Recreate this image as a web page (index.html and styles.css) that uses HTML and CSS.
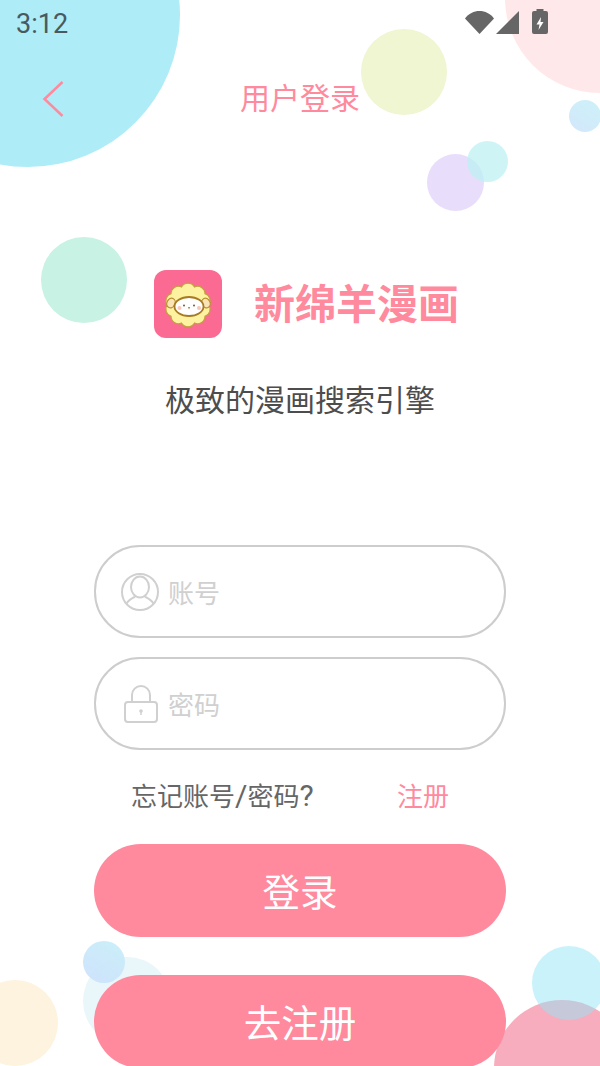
FILE: index.html
```html
<!DOCTYPE html>
<html lang="zh-CN">
<head>
<meta charset="utf-8">
<title>用户登录</title>
<link rel="stylesheet" href="styles.css">
</head>
<body>
<div class="page">
  <div class="bubbles" aria-hidden="true">
    <i class="b b-cyan"></i><i class="b b-rose"></i><i class="b b-lime"></i><i class="b b-sky"></i>
    <i class="b b-purple"></i><i class="b b-teal"></i><i class="b b-mint"></i>
    <i class="b b-cream"></i><i class="b b-pale"></i><i class="b b-blue"></i>
    <i class="b b-pink"></i><i class="b b-aqua"></i>
  </div>
  <div class="status">
    <span class="time">3:12</span>
    <div class="status-icons">
      <svg class="wifi" width="29" height="23" viewBox="0 0 29 23"><path d="M0 7.500C3.500 2.500 9 0 14.500 0S25.500 2.500 29 7.500L14.500 23z" fill="#666"/></svg>
      <svg class="signal" width="23" height="23" viewBox="0 0 23 23"><path d="M0 23 23 0v23z" fill="#666"/></svg>
      <svg class="batt" width="16" height="25" viewBox="0 0 16 25"><path d="M4.500 0h7v2H14a2 2 0 0 1 2 2v19a2 2 0 0 1-2 2H2a2 2 0 0 1-2-2V4a2 2 0 0 1 2-2h2.500z" fill="#666"/><path d="M9 8 4.500 15.500H7.500L6.500 21 11.500 13H8.500z" fill="#fff"/></svg>
    </div>
  </div>
  <header class="nav">
    <svg class="back" width="22" height="36" viewBox="0 0 22 36"><path d="M20.500 1 2.500 18l18 17" fill="none" stroke="#ff8a9e" stroke-width="2.500"/></svg>
    <h1 class="title">用户登录</h1>
  </header>
  <section class="brand">
    <div class="brand-row">
      <svg class="logo" width="68" height="68" viewBox="0 0 68 68">
        <rect width="68" height="68" rx="12" fill="#fb6a92"/>
        <path d="M55 35A7.500 7.500 0 0 1 51 46.200 7.500 7.500 0 0 1 40.500 53.100 7.500 7.500 0 0 1 27.500 53.100 7.500 7.500 0 0 1 17 46.200 7.500 7.500 0 0 1 13 35 7.500 7.500 0 0 1 17 23.800 7.500 7.500 0 0 1 27.500 16.900 7.500 7.500 0 0 1 40.500 16.900 7.500 7.500 0 0 1 51 23.800 7.500 7.500 0 0 1 55 35z" fill="#fdf2a0" stroke="#c4a040" stroke-width="1.200"/>
        <ellipse cx="17" cy="33" rx="4" ry="5" fill="#fbe3b8" stroke="#b8902f" stroke-width="1.200" transform="rotate(25 17 33)"/>
        <ellipse cx="52" cy="33" rx="4" ry="5" fill="#fbe3b8" stroke="#b8902f" stroke-width="1.200" transform="rotate(-25 52 33)"/>
        <ellipse cx="35" cy="36.500" rx="14.500" ry="9.500" fill="#fff" stroke="#a87a22" stroke-width="1.800"/>
        <circle cx="30" cy="35.500" r="1" fill="#7a5a30"/><circle cx="40" cy="35.500" r="1" fill="#7a5a30"/>
        <circle cx="25.500" cy="38" r="2" fill="#fbc5b8"/><circle cx="45" cy="38" r="2" fill="#fbc5b8"/>
        <path d="M34 37h2.200L35 39.500z" fill="#a08050"/>
      </svg>
      <span class="brand-name">新绵羊漫画</span>
    </div>
    <p class="slogan">极致的漫画搜索引擎</p>
  </section>
  <form class="form">
    <label class="field">
      <svg width="38" height="38" viewBox="0 0 38 38" fill="none" stroke="#d0d0d0" stroke-width="2"><circle cx="19" cy="19" r="18"/><ellipse cx="19" cy="14" rx="9" ry="10.500"/><path d="M5.500 31c2-5 7-6 8.500-7.500M32.500 31c-2-5-7-6-8.500-7.500"/></svg>
      <span class="ph">账号</span>
    </label>
    <label class="field">
      <svg class="lock" width="34" height="38" viewBox="0 0 34 38" fill="none" stroke="#d0d0d0" stroke-width="2"><path d="M8 17V10a9 9 0 0 1 18 0v7"/><rect x="1" y="17" width="32" height="20" rx="3"/><circle cx="17" cy="26" r="1.800" fill="#d0d0d0" stroke="none"/><path d="M17 26v4" stroke-width="1.500"/></svg>
      <span class="ph">密码</span>
    </label>
    <div class="links">
      <span class="forgot">忘记账号<span class="latin">/</span>密码<span class="latin">?</span></span>
      <span class="reg">注册</span>
    </div>
    <button type="button" class="btn">登录</button>
    <button type="button" class="btn btn-second">去注册</button>
  </form>
</div>
</body>
</html>
```
FILE: styles.css
```css
* { box-sizing: border-box; }
html, body { margin: 0; padding: 0; background: #fff; }
body { font-family: "Noto Sans CJK SC", "Noto Sans", sans-serif; }
.page { position: relative; width: 600px; height: 1066px; overflow: hidden; background: #fff; }
.bubbles { position: absolute; inset: 0; }
.b { position: absolute; display: block; border-radius: 50%; }
.b-cyan { left: -124px; top: -137px; width: 304px; height: 304px; background: #aeecf7; }
.b-rose { left: 505px; top: -97px; width: 190px; height: 190px; background: #ffe8ea; }
.b-lime { left: 361px; top: 29px; width: 86px; height: 86px; background: #f0f5d2; }
.b-sky { left: 569px; top: 100px; width: 32px; height: 32px; background: linear-gradient(30deg, #d3e7fc, #cdf1f8); }
.b-purple { left: 427px; top: 154px; width: 57px; height: 57px; background: #e8defb; }
.b-teal { left: 467px; top: 141px; width: 41px; height: 41px; background: rgba(190, 240, 243, .75); }
.b-mint { left: 41px; top: 237px; width: 86px; height: 86px; background: #c8f2e3; }
.b-cream { left: -28px; top: 980px; width: 86px; height: 86px; background: #fdf3df; }
.b-pale { left: 83px; top: 957px; width: 88px; height: 88px; background: #e9f6fa; }
.b-blue { left: 83px; top: 941px; width: 42px; height: 42px; background: linear-gradient(30deg, rgba(205, 225, 252, .95), rgba(200, 238, 248, .95)); }
.b-pink { left: 494px; top: 1000px; width: 136px; height: 136px; background: #f7adbe; }
.b-aqua { left: 532px; top: 946px; width: 74px; height: 74px; background: rgba(150, 230, 245, .5); }
.status { position: relative; display: flex; justify-content: space-between; height: 50px; padding: 8px 52px 0 16px; }
.time { font-family: Roboto, sans-serif; font-size: 27px; line-height: 32px; color: #485a60; }
.status-icons { display: flex; gap: 2px; align-items: flex-start; }
.wifi, .signal { margin-top: 3px; }
.batt { margin-top: 1px; margin-left: 11px; }
.nav { position: relative; display: flex; justify-content: center; align-items: center; height: 96px; }
.back { position: absolute; left: 42px; top: 31px; }
.title { margin: 0; font-weight: 400; font-size: 30px; line-height: 92px; padding-bottom: 4px; color: #ff8a9e; }
.brand { position: relative; display: flex; flex-direction: column; align-items: center; padding-top: 124px; }
.brand-row { display: flex; align-items: center; gap: 32px; margin-left: 13px; }
.logo { display: block; }
.brand-name { font-size: 41px; font-weight: 700; line-height: 62px; padding-bottom: 6px; color: #ff8a9e; }
.slogan { margin: 38px 0 0; font-size: 30px; line-height: 44px; color: #4d4d4d; }
.form { position: relative; display: flex; flex-direction: column; padding: 125px 94px 0; }
.field { display: flex; align-items: center; gap: 9px; height: 93px; padding-left: 25px; border: 2px solid #cdcdcd; border-radius: 46px; background: rgba(255,255,255,.6); }
.field + .field { margin-top: 19px; }
.lock { margin-left: 3px; margin-right: 1px; }
.ph { font-size: 26px; color: #d0d0d0; }
.links { display: flex; height: 94px; padding: 0 0 4px 37px; align-items: center; font-size: 26px; line-height: 36px; }
.forgot { width: 266px; color: #666; white-space: nowrap; }
.latin { font-family: Roboto, sans-serif; font-size: 30px; line-height: 1; }
.reg { color: #ff8a9e; }
.btn { display: block; width: 100%; height: 93px; padding: 0 0 2px; border: 0; border-radius: 47px; background: #ff8a9e; color: #fff; font: inherit; font-size: 37.500px; flex: none; }
.btn-second { margin-top: 38px; }
```
